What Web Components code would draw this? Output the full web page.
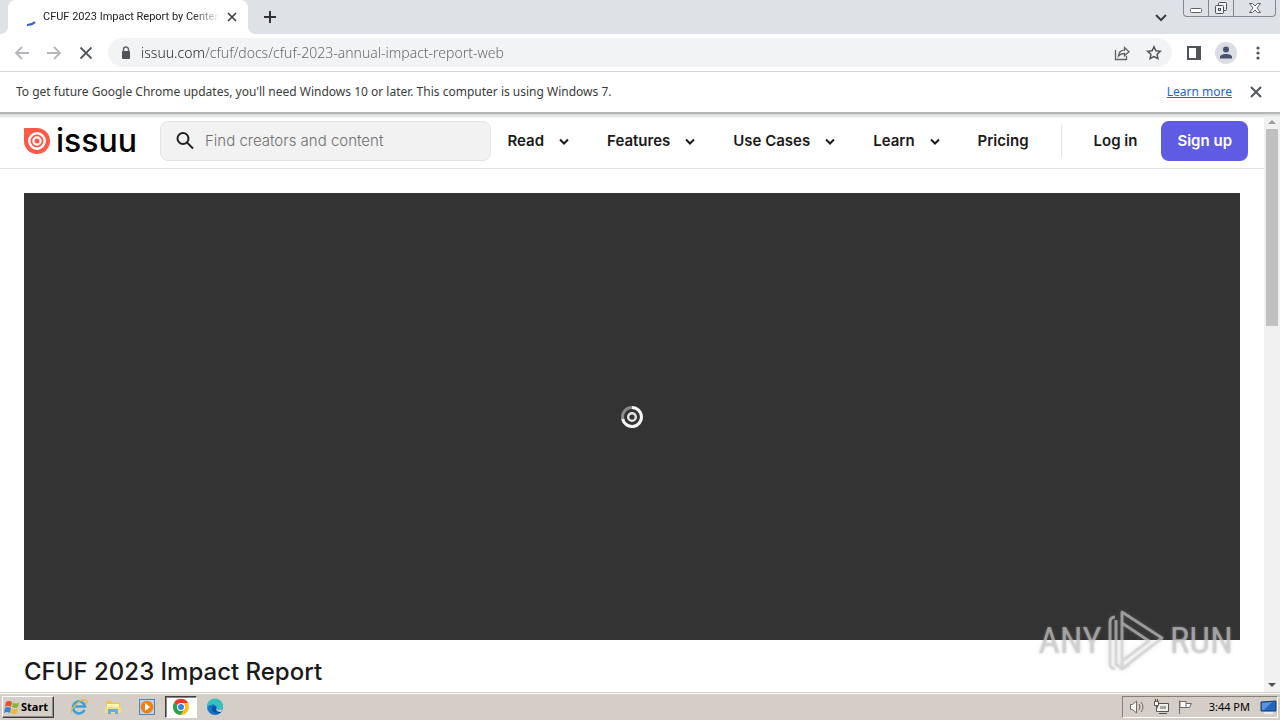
<!DOCTYPE html>
<html lang="en">
<head>
<meta charset="utf-8">
<title>CFUF 2023 Impact Report</title>
<style>
html,body{margin:0;height:100%;overflow:hidden;background:#fff}
body{font-family:"Noto Sans","Open Sans",sans-serif}
</style>
</head>
<body>
<app-desktop></app-desktop>
<script>
const define = (name, css, html) => customElements.define(name, class extends HTMLElement {
  constructor() {
    super();
    this.attachShadow({mode: 'open'}).innerHTML = `<style>
      *{box-sizing:border-box}
      button{font:inherit;color:inherit;background:none;border:0;padding:0;margin:0;display:grid;place-items:center}
      svg{display:block;flex:none}
      ${css}</style>${html}`;
  }
});

define('tab-strip', `
:host{display:flex;height:34px;background:#dee1e6;color:#3c4043;padding-left:8px;flex:none}
.tab{display:flex;align-items:center;width:240px;background:#fff;border-radius:8px 8px 0 0;padding:0 8px 0 16px;gap:4px;position:relative}
.tab::before,.tab::after{content:"";position:absolute;bottom:0;width:8px;height:8px}
.tab::before{left:-8px;background:radial-gradient(circle at 0 0,#dee1e6 8px,#fff 8px)}
.tab::after{right:-8px;background:radial-gradient(circle at 100% 0,#dee1e6 8px,#fff 8px)}
.name{flex:1;font:11px/16px Roboto,sans-serif;white-space:nowrap;overflow:hidden;-webkit-mask:linear-gradient(90deg,#000 84%,transparent);color:#202226}
.new{width:28px;margin-left:8px}
.fill{flex:1}
.search{width:24px;margin-right:10px}
.win{display:flex;height:17px;border:1px solid #85888e;border-top:0;border-radius:0 0 4px 4px;margin-right:4px;width:93px}
.win button{flex:0 0 25px;border-right:1px solid #85888e}
.win button:last-child{border:0;flex:1}
`, `
<div class="tab">
 <svg width="15" height="20" fill="none" stroke="#3565c4" stroke-width="2"><path d="M3 18c4 0 6-1 8-3"/></svg>
 <span class="name">CFUF 2023 Impact Report by Center</span>
 <button aria-label="Close tab"><svg width="16" height="16" stroke="#3c4043" stroke-width="1.7"><path d="m4 4 8 8m0-8-8 8"/></svg></button>
</div>
<button class="new" aria-label="New tab"><svg width="14" height="14" stroke="#303236" stroke-width="2"><path d="M7 1v12M1 7h12"/></svg></button>
<div class="fill"></div>
<button class="search" aria-label="Search tabs"><svg width="12" height="12" fill="none" stroke="#3c4043" stroke-width="2"><path d="m1 4 5 5 5-5"/></svg></button>
<div class="win">
 <button aria-label="Minimize"><svg width="14" height="16" fill="#fff" stroke="#5b5f68"><rect x="1.500" y="8.500" width="11" height="4" rx="1"/></svg></button>
 <button aria-label="Restore"><svg width="14" height="16" fill="#eef0f3" stroke="#4d515a"><rect x="4.500" y="2.500" width="8" height="8" rx="1"/><rect x="1.500" y="5.500" width="8" height="8" rx="1"/><rect x="4.500" y="8.500" width="2" height="2"/></svg></button>
 <button aria-label="Close"><svg width="14" height="16" fill="#fff" stroke="#5b5f68"><path d="M1.500 3.500h3L7 6l2.500-2.500h3L9 8l3.500 4.500h-3L7 10l-2.500 2.500h-3L5 8z"/></svg></button>
</div>`);

define('address-bar', `
:host{display:flex;align-items:center;height:38px;background:#fff;border-bottom:1px solid #d5d7da;padding:0 10px;gap:8px;flex:none;color:#5f6368}
button{width:24px;height:24px}
.box{flex:1;display:flex;align-items:center;height:29px;background:#f1f3f4;border-radius:15px;padding:0 6px 0 10px;gap:8px;margin:0 2px}
input{flex:1;min-width:0;border:0;outline:0;padding:0;font:300 14px/20px "Noto Sans","Open Sans",sans-serif;color:transparent;background:linear-gradient(90deg,#202124 64px,#5f6368 64px);-webkit-background-clip:text;background-clip:text}
.me{width:22px;height:22px;border-radius:50%;background:#dadde3}
`, `
<button aria-label="Back"><svg width="16" height="16" fill="none" stroke="#b4b6b9" stroke-width="1.800"><path d="M15 8H2m6-6L2 8l6 6"/></svg></button>
<button aria-label="Forward"><svg width="16" height="16" fill="none" stroke="#b4b6b9" stroke-width="1.800"><path d="M1 8h13M8 2l6 6-6 6"/></svg></button>
<button aria-label="Stop"><svg width="14" height="14" stroke="#54575b" stroke-width="1.800"><path d="m1.500 1.500 11 11m0-11-11 11"/></svg></button>
<div class="box">
 <svg width="15" height="16"><path d="M5.500 7V4.500a2.500 2.500 0 0 1 5 0V7" fill="none" stroke="#5f6368" stroke-width="1.500"/><rect x="4" y="6" width="8" height="8" rx="1" fill="#505357"/></svg>
 <input aria-label="Address" value="issuu.com/cfuf/docs/cfuf-2023-annual-impact-report-web">
 <button aria-label="Share"><svg width="16" height="16" fill="none" stroke="#5f6368" stroke-width="1.300"><path d="M1.500 5v9.500h11V11"/><path d="M4.500 11c.4-4 2.500-5.800 6-5.800V2.500L15 6.800l-4.500 4V8.500c-2.800 0-4.500.6-6 2.500z"/></svg></button>
 <button aria-label="Bookmark"><svg width="16" height="16" fill="none" stroke="#505357" stroke-width="1.500"><path d="m8 1.800 1.900 4 4.400.5-3.200 3 .8 4.300L8 11.500l-3.900 2.100.8-4.300-3.200-3 4.400-.5z"/></svg></button>
</div>
<button aria-label="Side panel"><svg width="14" height="14"><path d="M0 0h14v14H0zM2 2v10h7V2z" fill="#505357" fill-rule="evenodd"/></svg></button>
<button aria-label="Profile"><span class="me"><svg width="22" height="22" fill="#48516b"><circle cx="11" cy="7.500" r="3"/><path d="M5 16.500v-1.500c0-4 12-4 12 0v1.500z"/></svg></span></button>
<button aria-label="Menu"><svg width="16" height="16" fill="#505357"><circle cx="8" cy="3" r="1.600"/><circle cx="8" cy="8" r="1.600"/><circle cx="8" cy="13" r="1.600"/></svg></button>`);

define('info-bar', `
:host{display:flex;align-items:center;height:40px;background:#fff;padding:0 16px;font-size:12px;line-height:16px;color:#3a3b3d;flex:none}
span{flex:1}a{color:#1967d2;margin-right:16px}
`, `<span>To get future Google Chrome updates, you'll need Windows 10 or later. This computer is using Windows 7.</span>
<a href="#">Learn more</a><button aria-label="Dismiss"><svg width="16" height="16" stroke="#54575b" stroke-width="2"><path d="m3 3 10 10m0-10L3 13"/></svg></button>`);

define('nav-item', `
:host{display:block;flex:none}
button{display:flex;align-items:center;gap:12px;height:40px;font:600 15px/20px Inter,sans-serif;color:#1a1a1a}
`, `<button><slot></slot><svg width="16" height="16" fill="none" stroke="#1a1a1a" stroke-width="2"><path d="m4 6.500 4 4 4-4"/></svg></button>`);

define('site-header', `
:host{display:flex;align-items:center;height:55px;border-bottom:1px solid #e3e3e3;padding:0 16px 0 24px;color:#1a1a1a;font:600 15px/20px Inter,sans-serif;flex:none}
.logo{display:flex;align-items:center;gap:6px;width:136px;font:500 32px/40px Inter,sans-serif;color:#000;text-decoration:none}
.find{flex:1;display:flex;align-items:center;gap:8px;height:40px;background:#f2f2f2;border:1px solid #e4e4e4;border-radius:8px;padding:0 12px;margin-right:16px}
input{flex:1;min-width:0;border:0;outline:0;background:none;padding:0;font:300 15px/20px Inter,sans-serif;color:#1a1a1a}
input::placeholder{color:#707070;opacity:1}
nav{display:flex;align-items:center;gap:35px}
a{color:inherit;text-decoration:none}
.log{border-left:1px solid #e3e3e3;padding:6px 24px 6px 32px;margin-left:32px}
.sign{background:#5f5be3;color:#fff;border-radius:8px;padding:10px 16px}
`, `
<a class="logo" href="#" aria-label="issuu home"><svg width="26" height="26"><path d="M0 0h13a13 13 0 1 1-13 13z" fill="#fb5a49"/><circle cx="13" cy="13" r="7.700" fill="none" stroke="#fff" stroke-width="2.400"/><circle cx="13" cy="13" r="3.600" fill="none" stroke="#fff" stroke-width="2.200"/></svg><span>issuu</span></a>
<label class="find"><svg width="24" height="24" fill="none" stroke="#222" stroke-width="2"><circle cx="10" cy="9.500" r="5.500"/><path d="m14 13.500 6 6"/></svg><input aria-label="Search" placeholder="Find creators and content"></label>
<nav><nav-item>Read</nav-item><nav-item>Features</nav-item><nav-item>Use Cases</nav-item><nav-item>Learn</nav-item><a href="#">Pricing</a></nav>
<a class="log" href="#">Log in</a><button class="sign">Sign up</button>`);

define('page-scroll', `
:host{display:flex;flex-direction:column;align-items:center;width:16px;background:#f1f1f1;flex:none}
.thumb{width:12px;background:#c1c1c1;flex:0 0 34%}
.fill{flex:1}button{height:15px;width:16px}
`, `<button aria-label="Scroll up"><svg width="8" height="4"><path d="M4 0l4 4H0z" fill="#a0a0a0"/></svg></button><div class="thumb"></div><div class="fill"></div><button aria-label="Scroll down"><svg width="8" height="4"><path d="M0 0h8L4 4z" fill="#505050"/></svg></button>`);

define('issuu-page', `
:host{display:flex;flex:1;min-height:0;background:#fff;border-top:2px solid #b4b6b6;position:relative}
:host::before{content:"";position:absolute;inset:0 0 auto;height:4px;background:linear-gradient(#d5d7d7,#f8f8f8)}
main{flex:1;min-width:0;display:flex;flex-direction:column}
.reader{flex:1;background:#333;margin:24px 24px 0;display:grid;place-items:center}
h1{margin:0;padding:12px 24px 0;height:52px;font:500 24px/40px Inter,sans-serif;color:#1a1a1a}
`, `
<main><site-header></site-header>
<section class="reader" aria-label="Document reader"><svg width="24" height="24" fill="none"><circle cx="12" cy="12" r="9.500" stroke="#8c8c8c" stroke-width="3"/><path d="M12 2.500a9.500 9.500 0 1 1-9.300 11.500" stroke="#f4f4f4" stroke-width="3"/><circle cx="12" cy="12" r="3.800" stroke="#e6e6e6" stroke-width="2.400"/></svg></section>
<h1>CFUF 2023 Impact Report</h1></main><page-scroll></page-scroll>`);

define('task-bar', `
:host{display:flex;align-items:center;height:28px;background:#d4cec6;border-top:1px solid #d4cec6;box-shadow:inset 0 1px #fff;padding:2px 2px 2px;font:11px/16px "Noto Sans",sans-serif;color:#000;flex:none}
.start{display:flex;align-items:center;gap:1px;width:52px;height:22px;border:1px solid;border-color:#fff #404040 #404040 #fff;box-shadow:inset -1px -1px #888;font-weight:700;margin-right:8px}
.app{width:34px;height:22px}
.on{width:32px;margin:0 1px;background:#fff;border:1px solid;border-color:#404040 #fff #fff #404040;box-shadow:inset 1px 1px #888}
.fill{flex:1}
.tray{display:flex;align-items:center;gap:8px;height:22px;border:1px solid;border-color:#858078 #fff #fff #858078;padding:0 0 0 6px;font-size:11px}
time{margin:0 2px 0 8px}
`, `
<button class="start"><svg width="17" height="18"><path d="M3 4q3-2 6 0L8 9q-3-2-6 0z" fill="#e8532a"/><path d="M10 4.500q3 2 6 0L15 9q-3 2-6 0z" fill="#84b83c"/><path d="M2 10q3-2 6 0l-1 5q-3-2-6 0z" fill="#3b83cd"/><path d="M9 10.500q3 2 6 0l-1 4.500q-3 2-6 0z" fill="#f2b72c"/></svg>Start</button>
<button class="app" aria-label="Internet Explorer"><svg width="18" height="18" fill="none"><path d="M14.500 12A6 6 0 1 1 15 8.500H5" stroke="#36a1df" stroke-width="2.600"/><path d="M2 15C-1 11 12-1 16.500 2.500c1 1 0 3-1 4" stroke="#e6b848" stroke-width="1.300"/></svg></button>
<button class="app" aria-label="Explorer"><svg width="18" height="18"><path d="M2 3h6l1 2h7v10H2z" fill="#e9c75a"/><path d="M3 6h12v4H3z" fill="#fff3b6"/><path d="M1 9h16v6H1z" fill="#f4dc83"/><path d="M4 16v-5h10v5h-3v-2H7v2z" fill="#67aed6"/></svg></button>
<button class="app" aria-label="Media Player"><svg width="18" height="18"><rect x="1.500" y="1.500" width="15" height="15" fill="#b9d3ec" stroke="#5384b5"/><circle cx="9" cy="9" r="6.300" fill="#f27f13"/><path d="m7 5 5 4-5 4z" fill="#fff"/></svg></button>
<button class="app on" aria-label="Chrome"><svg width="18" height="18"><circle cx="9" cy="9" r="8" fill="#fbc116"/><path d="M9 9 2 5a8 8 0 0 1 14 0H9z" fill="#e33b2e"/><path d="M2 5a8 8 0 0 0 6.500 12L12.500 11 9 9z" fill="#2da24c"/><circle cx="9" cy="9" r="4" fill="#fff"/><circle cx="9" cy="9" r="3" fill="#3f7de8"/></svg></button>
<button class="app" aria-label="Edge"><svg width="18" height="18"><circle cx="9" cy="9" r="8" fill="#1478c8"/><path d="M1 8a8 8 0 0 1 16 1c0 4-5 4-6.500 2.500C12 9 9.500 6 6 6.500 3 7 1.500 8 1 10z" fill="#35c1c1"/><path d="M6 9c-1 4 3 8 8 6l2-2c-3 1-6 0-6-3 0-2-3-3-4-1z" fill="#0c509e"/><path d="M10 10c0 2 4 3 7 1l-2 3c-3 0-5-1-5-4z" fill="#d4cec6"/></svg></button>
<div class="fill"></div>
<div class="tray">
<svg width="16" height="16" fill="#fff" stroke="#6e6a64"><path d="M1.500 5.500h2l4-3.500v12l-4-3.500h-2z"/><path d="M10 5q2 3 0 6m2-8q4 5 0 10" fill="none"/></svg>
<svg width="16" height="16" fill="#eee" stroke="#55524e"><path d="M4.500 4.500h11v8h-11zM6 14.500h8"/><path d="M1.500 2.500h4v4h-4zM2.500 0v2m2-2v2M3.500 7v5.500h3" fill="#fff"/><path d="M7 7h6v3H7z" fill="#a9a7a3" stroke="none"/></svg>
<svg width="16" height="16" fill="#fff" stroke="#6e6a64"><path d="M2.500 15V1.500M3 2.500h6v6H3zM9 4.500h5.500l-2 4H9"/></svg>
<time>3:44 PM</time>
<svg width="17" height="16"><path d="M1 3l15-1v10H1z" fill="#2466bd" stroke="#174078"/><path d="M2 4l10-1-8 8H2z" fill="#5796df"/><path d="M4 14h9" stroke="#e7eaf0" stroke-width="2"/></svg></div>`);

define('any-run', `
:host{position:absolute;right:47px;bottom:48px;display:flex;align-items:center;gap:6px;font:37px/62px "Liberation Sans Narrow","Roboto Condensed",Roboto,sans-serif;color:rgba(205,205,205,.65);pointer-events:none;text-shadow:0 0 3px rgba(150,150,150,.5)}
svg{filter:drop-shadow(0 0 2px rgba(150,150,150,.4))}
`, `<span>ANY</span><svg width="56" height="62" fill="none" stroke="currentColor" stroke-width="3" stroke-linejoin="round"><path d="M7 7Q2 7 2 12v42q0 4 5 5M8 10v44l6 5 7-4M14 49V2l40 26-40 31v-8l27-20L14 13"/></svg><span>RUN</span>`);

define('app-desktop', `
:host{display:flex;flex-direction:column;height:100vh;position:relative}
`, `<tab-strip></tab-strip><address-bar></address-bar><info-bar></info-bar><issuu-page></issuu-page><task-bar></task-bar><any-run></any-run>`);
</script>
</body>
</html>
